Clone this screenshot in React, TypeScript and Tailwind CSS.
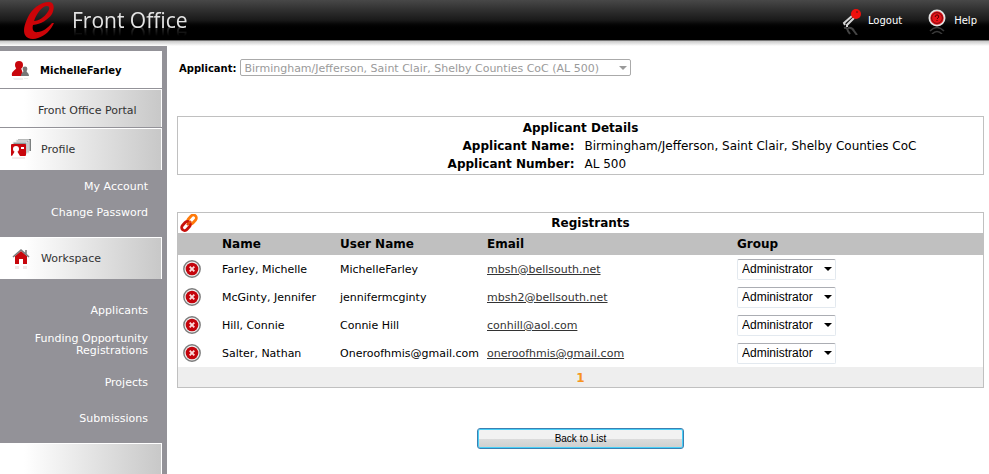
import { useState } from "react";
import type { ReactNode } from "react";

interface Registrant {
  name: string;
  userName: string;
  email: string;
}

const registrants: Registrant[] = [
  { name: "Farley, Michelle", userName: "MichelleFarley", email: "mbsh@bellsouth.net" },
  { name: "McGinty, Jennifer", userName: "jennifermcginty", email: "mbsh2@bellsouth.net" },
  { name: "Hill, Connie", userName: "Connie Hill", email: "conhill@aol.com" },
  { name: "Salter, Nathan", userName: "Oneroofhmis@gmail.com", email: "oneroofhmis@gmail.com" },
];

function Logo() {
  return (
    <svg width="34" height="40" viewBox="0 0 34 40" aria-hidden="true">
      <path
        fill="#cc0408"
        fillRule="evenodd"
        d="M27 2C18 2 10 9 6 17C2 25 1 31 3 35C5 39 11 40 16 38C23 36 29 30 32 23L30 23C26 28 20 32 16 32C11 33 10 29 11 25C19 24 26 20 30 14C33 8 32 2 27 2ZM12 21C15 13 20 6 25 6C28 6 28 9 25 13C22 17 17 21 12 21Z"
      />
    </svg>
  );
}

function KeyIcon() {
  return (
    <svg width="20" height="30" viewBox="0 0 20 30" aria-hidden="true">
      <path d="M10 11L2 18L3 20M12 13L5 20L5 22" fill="none" stroke="#d4d4d4" strokeWidth="2" />
      <path d="M2 23Q5 22 6 26L8 29M6 23Q10 22 12 26L15 30" fill="none" stroke="#444" strokeWidth="2" />
      <circle cx="14" cy="9" r="5" fill="#f0100c" />
      <circle cx="15" cy="7" r="1" fill="#8c1010" />
    </svg>
  );
}

function HelpIcon() {
  return (
    <svg width="18" height="28" viewBox="0 0 18 28" aria-hidden="true">
      <circle cx="9" cy="12" r="7.6" fill="#e8141a" stroke="#e2e2e2" strokeWidth="1.8" />
      <circle cx="9" cy="12" r="5.4" fill="none" stroke="#7c0a0e" />
      <path d="M7 11Q8 8 10 9Q12 11 9 13M9 14V15" fill="none" stroke="#500" />
      <path d="M2 25Q9 18 16 25M4 28Q9 23 14 28" fill="none" stroke="#3a3a3a" strokeWidth="1.6" />
    </svg>
  );
}

function UsersIcon() {
  return (
    <svg width="20" height="26" viewBox="0 0 20 26" aria-hidden="true">
      <circle cx="9" cy="8" r="4" fill="#c8060c" />
      <path d="M2 19C1 14 5 14 7 10H11C11 13 13 14 13 19Z" fill="#c8060c" />
      <circle cx="15" cy="12" r="2.4" fill="#777" />
      <path d="M11 19C11 16 13 16 14 13H16C17 16 19 16 19 19Z" fill="#777" />
      <path d="M3 21H13V23H4ZM14 21H18V22H14Z" fill="#eee" />
    </svg>
  );
}

function ProfileIcon() {
  return (
    <svg width="22" height="22" viewBox="0 0 22 22" aria-hidden="true">
      <path d="M8 0H21V12H8Z" fill="#7c8080" />
      <path d="M6 1H19V14H6Z" fill="#a4aaaa" stroke="#f2f2f2" />
      <path d="M3 3H17V15H3Z" fill="#8f9b9b" stroke="#f2f2f2" />
      <rect x="1" y="5" width="15" height="12" rx="1" fill="#c8060c" />
      <circle cx="6" cy="10" r="3" fill="#fff" />
      <path d="M2 17L5 12H7L10 17ZM11 8H14V10H11Z" fill="#fff" />
      <path d="M2 19H15" stroke="#e6d8d8" />
    </svg>
  );
}

function HomeIcon() {
  return (
    <svg width="18" height="24" viewBox="0 0 18 24" aria-hidden="true">
      <path d="M3 9L9 4L15 9V17H11V12H7V17H3Z" fill="#c8060c" />
      <path d="M1 10L9 3L17 10M14 3V7" fill="none" stroke="#7c7c7c" strokeWidth="1.6" />
      <path d="M3 19H7V22H3ZM11 19H15V22H11Z" fill="#f0e8e8" />
    </svg>
  );
}

function LinkIcon() {
  return (
    <svg width="18" height="18" viewBox="0 0 18 18" fill="none" strokeWidth="2.8" aria-hidden="true">
      <rect x="7" y="2.5" width="10" height="6" rx="3" stroke="#ff7a0a" transform="rotate(-48 12 5.5)" />
      <rect x="1" y="9" width="10" height="6" rx="3" stroke="#c8100c" transform="rotate(-48 6 12)" />
      <path d="M7 11L11 7" stroke="#e84a0c" strokeWidth="2.4" />
    </svg>
  );
}

function DeleteIcon() {
  return (
    <svg width="18" height="18" viewBox="0 0 18 18" aria-hidden="true">
      <circle cx="9" cy="9" r="8.2" fill="#eee" stroke="#7c7c7c" strokeWidth="1.4" />
      <circle cx="9" cy="9" r="6.3" fill="#c4040c" />
      <path d="M6.7 6.7L11.3 11.3M11.3 6.7L6.7 11.3" stroke="#fbdcdc" strokeWidth="1.9" />
    </svg>
  );
}

function Arrow({ className }: { className: string }) {
  return (
    <svg width="8" height="4" viewBox="0 0 8 4" aria-hidden="true" className={className}>
      <path d="M0 0H8L4 4Z" fill="currentColor" />
    </svg>
  );
}

function NavHeading({ icon, label }: { icon: ReactNode; label: string }) {
  return (
    <a
      href="#"
      className="flex h-[42px] items-center border-t border-r border-white bg-linear-to-r from-white from-15% to-[#c8c8c8] text-[#333]"
    >
      <span className="flex w-[41px] justify-center">{icon}</span>
      <span className="pt-[2px]">{label}</span>
    </a>
  );
}

function GroupSelect({ owner }: { owner: string }) {
  const [group, setGroup] = useState("Administrator");

  return (
    <div className="relative w-[99px]">
      <select
        aria-label={`Group for ${owner}`}
        value={group}
        onChange={(e) => setGroup(e.target.value)}
        className="block h-[21px] w-full appearance-none rounded-xs border border-[#e3e9ef] border-t-[#abadb3] bg-white pl-1 font-['Liberation_Sans',Arial,sans-serif] text-xs leading-[18px]"
      >
        <option>Administrator</option>
        <option>Member</option>
      </select>
      <Arrow className="pointer-events-none absolute top-2 right-1" />
    </div>
  );
}

export default function App() {
  return (
    <div className="flex min-h-screen flex-col bg-white font-['DejaVu_Sans',Verdana,sans-serif] text-[11px] text-black">
      <header className="flex h-10 items-center bg-linear-to-b from-[#484848] via-[#1a1a1a] via-50% to-black to-75% pl-[22px] text-white">
        <Logo />
        <h1 className="ml-4 font-['Open_Sans','Noto_Sans',sans-serif] text-[21px] leading-5 text-[#e4e4e4] [-webkit-box-reflect:below_-6px_linear-gradient(transparent,transparent_40%,rgba(255,255,255,0.3))]">
          Front Office
        </h1>
        <nav className="ml-auto flex h-9 items-center pr-3 text-[10px]">
          <a href="#" className="flex items-center gap-[6px]">
            <KeyIcon />
            Logout
          </a>
          <a href="#" className="ml-[26px] flex items-center gap-2">
            <HelpIcon />
            Help
          </a>
        </nav>
      </header>
      <div className="h-[6px] border-t border-[#777] bg-linear-to-b from-[#c8c8c8] to-white" />

      <div className="flex flex-1">
        <aside className="flex w-[167px] shrink-0 flex-col bg-[#939298] pt-[5px] pr-[5px] text-right text-white">
          <a href="#" className="flex h-[37px] items-center bg-white text-left text-[10px] font-bold text-black">
            <span className="flex w-10 justify-center">
              <UsersIcon />
            </span>
            <span className="pt-[2px]">MichelleFarley</span>
          </a>
          <a
            href="#"
            className="mt-px flex h-[38px] items-center border-t border-r border-white bg-linear-to-r from-white from-15% to-[#c8c8c8] pt-[6px] pl-[38px] text-left text-[#333]"
          >
            Front Office Portal
          </a>
          <div className="mt-px text-left">
            <NavHeading icon={<ProfileIcon />} label="Profile" />
          </div>
          <ul className="flex h-[67px] flex-col gap-3 pt-[10px] pr-[14px] leading-[14px]">
            <li><a href="#">My Account</a></li>
            <li><a href="#">Change Password</a></li>
          </ul>
          <div className="text-left">
            <NavHeading icon={<HomeIcon />} label="Workspace" />
          </div>
          <ul className="flex h-[164px] flex-col pt-[26px] pr-[14px] leading-3">
            <li><a href="#">Applicants</a></li>
            <li className="mt-4 pl-5"><a href="#">Funding Opportunity Registrations</a></li>
            <li className="mt-5"><a href="#">Projects</a></li>
            <li className="mt-6"><a href="#">Submissions</a></li>
          </ul>
          <div className="flex-1 border-t border-r border-white bg-linear-to-r from-white from-15% to-[#c8c8c8]" />
        </aside>

        <main className="min-w-0 flex-1 pt-[13px] pr-[5px] pl-[10px]">
          <div className="flex h-[17px] items-center gap-[3px] pl-[2px]">
            <label htmlFor="applicant" className="pt-px text-[10px] font-bold">Applicant:</label>
            <div className="relative w-[391px] text-[#9a9a9a]">
              <select
                id="applicant"
                disabled
                className="block h-[17px] w-full appearance-none rounded-xs border border-[#aaa] bg-white pl-1 text-[11px] leading-[17px] opacity-100"
              >
                <option>Birmingham/Jefferson, Saint Clair, Shelby Counties CoC (AL 500)</option>
              </select>
              <Arrow className="pointer-events-none absolute top-[7px] right-1" />
            </div>
          </div>

          <section className="mt-10 border border-[#c0c0c0] pt-[2px] pb-[1px] text-xs leading-[18px]">
            <h2 className="text-center font-bold">Applicant Details</h2>
            <dl className="grid grid-cols-2 gap-x-2">
              <dt className="pr-[2px] text-right font-bold">Applicant Name:</dt>
              <dd>Birmingham/Jefferson, Saint Clair, Shelby Counties CoC</dd>
              <dt className="pr-[2px] text-right font-bold">Applicant Number:</dt>
              <dd>AL 500</dd>
            </dl>
          </section>

          <section className="mt-[37px] border border-[#c0c0c0]">
            <div className="flex h-5 items-center text-xs">
              <button type="button" aria-label="Link registrant" className="ml-[2px] w-[18px]">
                <LinkIcon />
              </button>
              <h2 className="flex-1 text-center font-bold">Registrants</h2>
            </div>
            <table className="w-full table-fixed text-left">
              <colgroup>
                <col className="w-[44px]" />
                <col className="w-[118px]" />
                <col className="w-[147px]" />
                <col className="w-[250px]" />
                <col />
              </colgroup>
              <thead>
                <tr className="h-[22px] bg-[#c0c0c0] text-xs">
                  <td />
                  <th>Name</th>
                  <th>User Name</th>
                  <th>Email</th>
                  <th>Group</th>
                </tr>
              </thead>
              <tbody>
                {registrants.map((person) => (
                  <tr key={person.email} className="h-[28px]">
                    <td className="pl-[5px]">
                      <button type="button" aria-label={`Remove ${person.name}`} className="block">
                        <DeleteIcon />
                      </button>
                    </td>
                    <td className="pt-[2px]">{person.name}</td>
                    <td className="pt-[2px]">{person.userName}</td>
                    <td className="pt-[2px]">
                      <a href={`mailto:${person.email}`} className="text-[#333] underline">
                        {person.email}
                      </a>
                    </td>
                    <td>
                      <GroupSelect owner={person.name} />
                    </td>
                  </tr>
                ))}
              </tbody>
            </table>
            <div className="h-5 bg-[#eee] text-center text-xs leading-[22px] font-bold text-[#f7941d]">1</div>
          </section>

          <div className="mt-10 flex justify-center">
            <button
              type="button"
              className="h-[21px] w-[207px] rounded-[3px] border border-[#3c7fb1] bg-linear-to-b from-[#f2f2f2] from-50% via-[#dcdcdc] via-50% to-[#cfcfcf] font-['Liberation_Sans',Arial,sans-serif] text-[10px] inset-ring inset-ring-[#48d0f8]"
            >
              Back to List
            </button>
          </div>
        </main>
      </div>
    </div>
  );
}
